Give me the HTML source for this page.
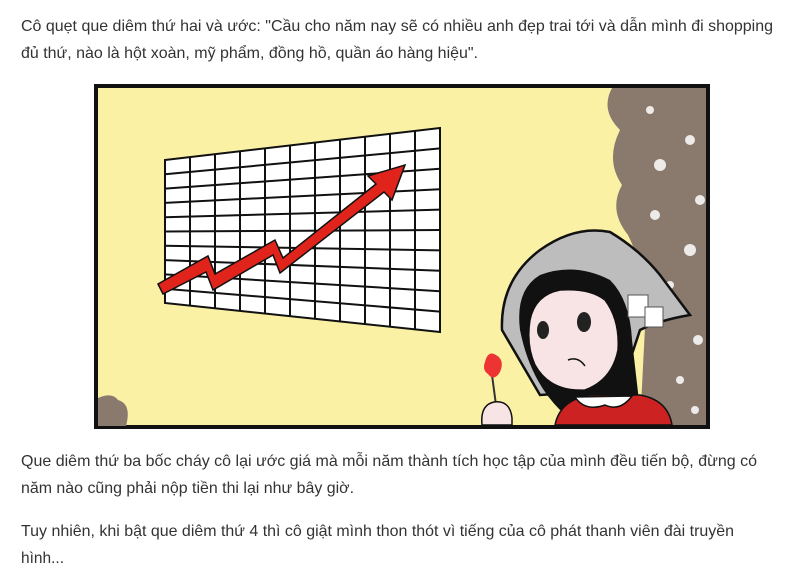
<!DOCTYPE html>
<html><head><meta charset="utf-8"><style>
html,body{margin:0;padding:0;background:#fff;width:785px;height:579px;overflow:hidden}
svg{display:block}
.t{font-family:"Liberation Sans",sans-serif;font-size:16px;fill:#333}
</style></head><body>
<svg width="785" height="579" viewBox="0 0 785 579" xmlns="http://www.w3.org/2000/svg">
<text class="t" x="21" y="31" textLength="752" lengthAdjust="spacingAndGlyphs">Cô quẹt que diêm thứ hai và ước: "Cầu cho năm nay sẽ có nhiều anh đẹp trai tới và dẫn mình đi shopping</text>
<text class="t" x="21" y="58" textLength="457" lengthAdjust="spacingAndGlyphs">đủ thứ, nào là hột xoàn, mỹ phẩm, đồng hồ, quần áo hàng hiệu".</text>

<!-- comic frame -->
<rect x="96" y="86" width="612" height="341" fill="#fbf1a5" stroke="#111" stroke-width="4"/>
<!-- brown background right -->
<path d="M612 88 Q600 110 620 130 Q605 160 622 185 Q608 210 628 235 Q640 260 650 300 L706 300 L706 88 Z" fill="#8a7a6e"/>
<path d="M650 230 L706 230 L706 425 L640 425 Z" fill="#8a7a6e"/>
<g fill="#fff" opacity="0.85">
<circle cx="650" cy="110" r="4"/><circle cx="690" cy="140" r="5"/><circle cx="660" cy="165" r="6"/><circle cx="700" cy="200" r="5"/><circle cx="655" cy="215" r="5"/><circle cx="690" cy="250" r="6"/><circle cx="670" cy="285" r="4"/><circle cx="698" cy="340" r="5"/><circle cx="680" cy="380" r="4"/><circle cx="695" cy="410" r="4"/><circle cx="640" cy="320" r="4"/>
</g>
<!-- bottom-left brown -->
<path d="M98 398 Q112 392 118 400 Q132 404 126 426 L98 426 Z" fill="#8a7a6e"/>

<!-- grid -->
<polygon points="165,160 440,128 440,332 165,303" fill="#fff" stroke="#111" stroke-width="2"/>
<g stroke="#111" stroke-width="2">
<line x1="190" y1="157.1" x2="190" y2="305.6"/>
<line x1="215" y1="154.2" x2="215" y2="308.3"/>
<line x1="240" y1="151.3" x2="240" y2="310.9"/>
<line x1="265" y1="148.4" x2="265" y2="313.5"/>
<line x1="290" y1="145.5" x2="290" y2="316.2"/>
<line x1="315" y1="142.5" x2="315" y2="318.8"/>
<line x1="340" y1="139.6" x2="340" y2="321.5"/>
<line x1="365" y1="136.7" x2="365" y2="324.1"/>
<line x1="390" y1="133.8" x2="390" y2="326.7"/>
<line x1="415" y1="130.9" x2="415" y2="329.4"/>
<line x1="165" y1="174.3" x2="440" y2="148.4"/>
<line x1="165" y1="188.6" x2="440" y2="168.8"/>
<line x1="165" y1="202.9" x2="440" y2="189.2"/>
<line x1="165" y1="217.2" x2="440" y2="209.6"/>
<line x1="165" y1="231.5" x2="440" y2="230"/>
<line x1="165" y1="245.8" x2="440" y2="250.4"/>
<line x1="165" y1="260.1" x2="440" y2="270.8"/>
<line x1="165" y1="274.4" x2="440" y2="291.2"/>
<line x1="165" y1="288.7" x2="440" y2="311.6"/>
</g>
<!-- arrow -->
<path d="M158 284 L208 256 L215 274 L275 240 L283 258 L376 184 L368 176 L405 165 L392 200 L384 192 L280 273 L273 255 L213 290 L206 272 L163 294 Z" fill="#e0241b" stroke="#111" stroke-width="1.5"/>

<!-- girl -->
<path d="M502 330 Q500 280 540 250 Q575 225 610 232 Q640 250 660 275 L690 315 Q660 320 640 330 L620 390 L540 395 Z" fill="#bdbdbd" stroke="#111" stroke-width="2.5"/>
<path d="M520 330 Q515 290 540 275 Q575 262 610 280 Q630 300 632 340 L640 410 L560 410 Q530 380 520 330 Z" fill="#111"/>
<path d="M530 320 Q535 295 560 290 Q590 288 605 300 Q620 320 618 350 Q612 380 585 390 Q550 392 535 365 Q526 345 530 320 Z" fill="#f8e4e4" stroke="#111" stroke-width="1.5"/>
<ellipse cx="543" cy="330" rx="6" ry="9" fill="#222"/>
<ellipse cx="584" cy="322" rx="7" ry="10" fill="#222"/>
<path d="M568 360 Q578 356 585 366" fill="none" stroke="#111" stroke-width="1.5"/>
<rect x="628" y="295" width="20" height="22" fill="#fff" stroke="#555"/>
<rect x="645" y="307" width="18" height="20" fill="#fff" stroke="#555"/>
<path d="M555 425 Q560 400 590 395 L640 395 Q668 400 672 425 Z" fill="#cc2222" stroke="#111" stroke-width="1.5"/>
<path d="M575 397 Q585 412 605 405 Q620 412 632 396 Z" fill="#fff" stroke="#111" stroke-width="1.5"/>
<!-- match -->
<line x1="492" y1="375" x2="496" y2="405" stroke="#333" stroke-width="2"/>
<path d="M485 362 Q488 350 496 355 Q505 360 500 372 Q494 382 488 374 Q482 370 485 362 Z" fill="#e33"/>
<path d="M482 425 Q480 405 494 402 Q510 400 512 418 L512 425 Z" fill="#f8e4e4" stroke="#111" stroke-width="1.5"/>

<text class="t" x="21" y="466" textLength="736" lengthAdjust="spacingAndGlyphs">Que diêm thứ ba bốc cháy cô lại ước giá mà mỗi năm thành tích học tập của mình đều tiến bộ, đừng có</text>
<text class="t" x="21" y="493" textLength="333" lengthAdjust="spacingAndGlyphs">năm nào cũng phải nộp tiền thi lại như bây giờ.</text>
<text class="t" x="21" y="536" textLength="713" lengthAdjust="spacingAndGlyphs">Tuy nhiên, khi bật que diêm thứ 4 thì cô giật mình thon thót vì tiếng của cô phát thanh viên đài truyền</text>
<text class="t" x="21" y="563" textLength="43" lengthAdjust="spacingAndGlyphs">hình...</text>
</svg>
</body></html>
